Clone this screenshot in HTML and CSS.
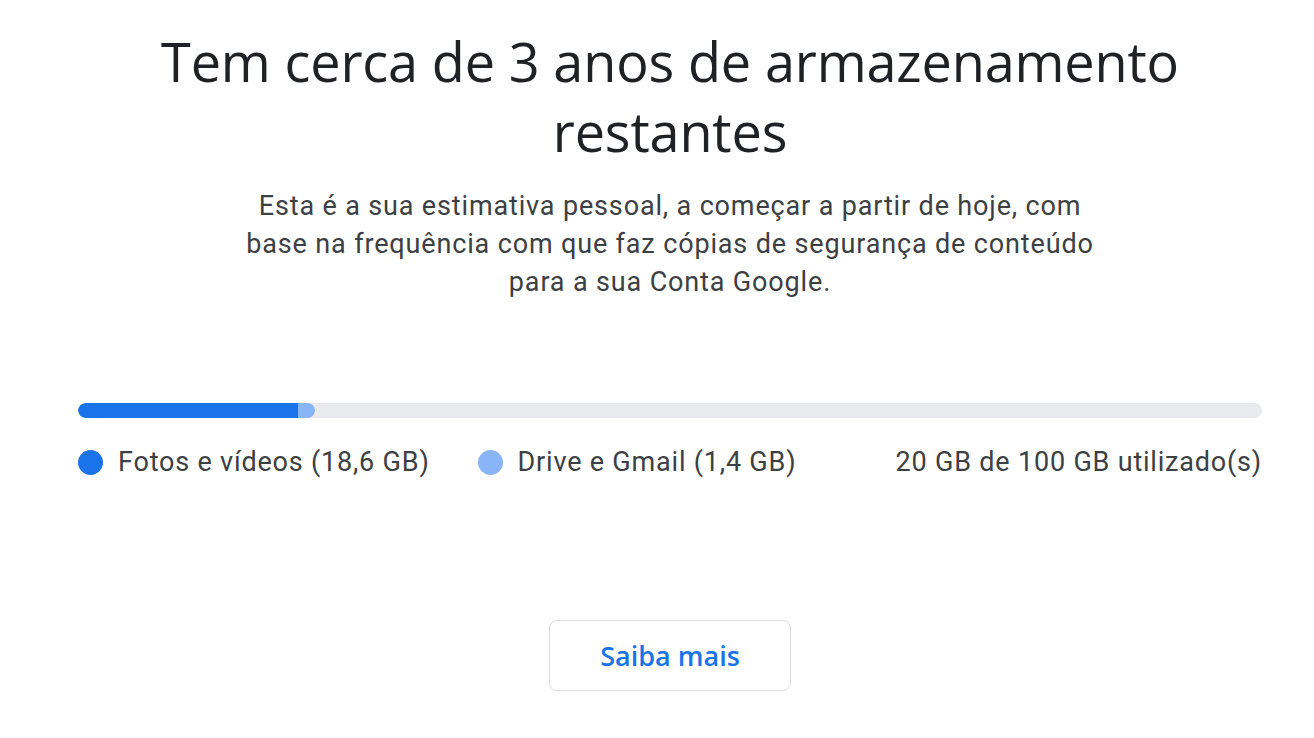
FILE: index.html
```html
<!DOCTYPE html>
<html lang="pt">
<head>
<meta charset="utf-8">
<link rel="stylesheet" href="styles.css">
</head>
<body>
<main class="card">
  <h1 class="title">Tem cerca de 3 anos de armazenamento restantes</h1>
  <p class="desc">Esta é a sua estimativa pessoal, a começar a partir de hoje, com base na frequência com que faz cópias de segurança de conteúdo para a sua Conta Google.</p>
  <div class="bar">
    <div class="seg seg-photos" style="width:18.6%"></div>
    <div class="seg seg-drive" style="width:1.4%"></div>
  </div>
  <div class="legend">
    <div class="item"><span class="dot dot-photos"></span>Fotos e vídeos (18,6 GB)</div>
    <div class="item"><span class="dot dot-drive"></span>Drive e Gmail (1,4 GB)</div>
    <div class="total">20 GB de 100 GB utilizado(s)</div>
  </div>
  <div class="actions">
    <button class="btn">Saiba mais</button>
  </div>
</main>
</body>
</html>
```

FILE: styles.css
```css
html, body {
  margin: 0;
  padding: 0;
  background: #ffffff;
}
body {
  font-family: Roboto, "Liberation Sans", sans-serif;
  color: #3c4043;
}
.card {
  width: 1184px;
  margin-left: 78px;
  padding-top: 26px;
  display: flex;
  flex-direction: column;
}
.title {
  margin: 0 auto;
  width: 1060px;
  text-align: center;
  font-family: "Open Sans", Roboto, sans-serif;
  font-weight: 400;
  font-size: 54px;
  line-height: 70px;
  color: #202124;
  letter-spacing: -0.15px;
}
.desc {
  margin: 21px auto 0;
  width: 870px;
  text-align: center;
  font-size: 27px;
  line-height: 38px;
  letter-spacing: 0.85px;
}
.bar {
  margin-top: 102px;
  height: 15px;
  border-radius: 8px;
  background: #e8eaed;
  display: flex;
  overflow: hidden;
}
.seg-photos {
  background: #1a73e8;
  border-radius: 8px 0 0 8px;
}
.seg-drive {
  background: #8ab4f8;
  border-radius: 0 8px 8px 0;
}
.legend {
  margin-top: 25px;
  display: flex;
  align-items: center;
  font-size: 27px;
  line-height: 38px;
  letter-spacing: 0.8px;
}
.item {
  display: flex;
  align-items: center;
  margin-right: 48px;
}
.dot {
  width: 25px;
  height: 25px;
  border-radius: 50%;
  margin-right: 15px;
}
.dot-photos { background: #1a73e8; }
.dot-drive { background: #8ab4f8; }
.total {
  margin-left: auto;
}
.actions {
  margin-top: 139px;
  display: flex;
  justify-content: center;
}
.btn {
  width: 242px;
  height: 71px;
  border: 1px solid #dadce0;
  border-radius: 8px;
  background: #ffffff;
  color: #1a73e8;
  font-family: "Open Sans", Roboto, sans-serif;
  font-size: 27px;
  font-weight: 600;
  cursor: pointer;
}
```
